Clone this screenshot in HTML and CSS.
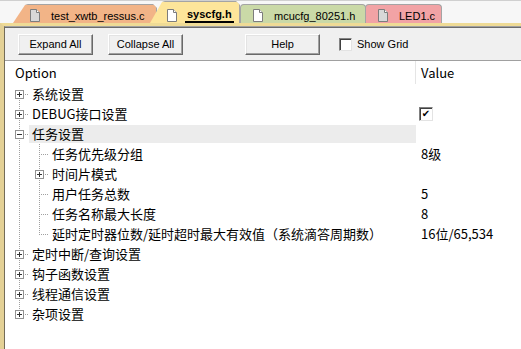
FILE: index.html
```html
<!DOCTYPE html>
<html lang="zh">
<head>
    <meta charset="UTF-8">
    <title>syscfg.h</title>
    <link rel="stylesheet" href="styles.css">
</head>
<body>
    <div class="tabbar">
        <div class="tab tab-a slant">
            <svg class="doc" width="10" height="13" viewBox="0 0 10 13"><path d="M0.5 0.5H6.5L9.5 3.5V12.5H0.5Z" fill="#d8d8d8" stroke="#7d7d7d"/><path d="M6.5 0.5V3.5H9.5" fill="#fff" stroke="#7d7d7d"/></svg>
            <span>test_xwtb_ressus.c</span>
        </div>
        <div class="tab tab-b slant active">
            <svg class="doc" width="10" height="13" viewBox="0 0 10 13"><path d="M0.5 0.5H6.5L9.5 3.5V12.5H0.5Z" fill="#fff" stroke="#7d7d7d"/><path d="M6.5 0.5V3.5H9.5" fill="#fff" stroke="#7d7d7d"/></svg>
            <span>syscfg.h</span>
        </div>
        <div class="tab tab-c">
            <svg class="doc" width="10" height="13" viewBox="0 0 10 13"><path d="M0.5 0.5H6.5L9.5 3.5V12.5H0.5Z" fill="#fff" stroke="#7d7d7d"/><path d="M6.5 0.5V3.5H9.5" fill="#fff" stroke="#7d7d7d"/></svg>
            <span>mcucfg_80251.h</span>
        </div>
        <div class="tab tab-d">
            <svg class="doc" width="10" height="13" viewBox="0 0 10 13"><path d="M0.5 0.5H6.5L9.5 3.5V12.5H0.5Z" fill="#d8d8d8" stroke="#7d7d7d"/><path d="M6.5 0.5V3.5H9.5" fill="#fff" stroke="#7d7d7d"/></svg>
            <span>LED1.c</span>
        </div>
    </div>

    <div class="frame">
        <div class="inner">
            <div class="toolbar">
                <button class="btn">Expand All</button>
                <button class="btn">Collapse All</button>
                <button class="btn help">Help</button>
                <label class="showgrid"><span class="cb"></span>Show Grid</label>
            </div>

            <div class="tree">
                <div class="head">
                    <div class="opt">Option</div>
                    <div class="val">Value</div>
                </div>

                <div class="row">
                    <div class="opt"><i class="c first"><b class="exp plus"></b></i><span class="txt">系统设置</span></div>
                    <div class="val"></div>
                </div>
                <div class="row">
                    <div class="opt"><i class="c tee"><b class="exp plus"></b></i><span class="txt">DEBUG接口设置</span></div>
                    <div class="val"><span class="check">&#10004;</span></div>
                </div>
                <div class="row">
                    <div class="opt"><i class="c tee"><b class="exp"></b></i><span class="txt sel">任务设置</span></div>
                    <div class="val"></div>
                </div>
                <div class="row">
                    <div class="opt"><i class="c vert"></i><i class="c tee"></i><span class="txt">任务优先级分组</span></div>
                    <div class="val">8级</div>
                </div>
                <div class="row">
                    <div class="opt"><i class="c vert"></i><i class="c tee"><b class="exp plus"></b></i><span class="txt">时间片模式</span></div>
                    <div class="val"></div>
                </div>
                <div class="row">
                    <div class="opt"><i class="c vert"></i><i class="c tee"></i><span class="txt">用户任务总数</span></div>
                    <div class="val">5</div>
                </div>
                <div class="row">
                    <div class="opt"><i class="c vert"></i><i class="c tee"></i><span class="txt">任务名称最大长度</span></div>
                    <div class="val">8</div>
                </div>
                <div class="row">
                    <div class="opt"><i class="c vert"></i><i class="c last"></i><span class="txt">延时定时器位数/延时超时最大有效值（系统滴答周期数）</span></div>
                    <div class="val">16位/65,534</div>
                </div>
                <div class="row">
                    <div class="opt"><i class="c tee"><b class="exp plus"></b></i><span class="txt">定时中断/查询设置</span></div>
                    <div class="val"></div>
                </div>
                <div class="row">
                    <div class="opt"><i class="c tee"><b class="exp plus"></b></i><span class="txt">钩子函数设置</span></div>
                    <div class="val"></div>
                </div>
                <div class="row">
                    <div class="opt"><i class="c tee"><b class="exp plus"></b></i><span class="txt">线程通信设置</span></div>
                    <div class="val"></div>
                </div>
                <div class="row">
                    <div class="opt"><i class="c last"><b class="exp plus"></b></i><span class="txt">杂项设置</span></div>
                    <div class="val"></div>
                </div>
            </div>
        </div>
    </div>
</body>
</html>
```

FILE: styles.css
```css
body {
    margin: 0;
    width: 521px;
    height: 349px;
    overflow: hidden;
    background: #fff;
    font-family: "Liberation Sans", Arial, sans-serif;
}

/* tab strip */
.tabbar {
    display: flex;
    align-items: flex-end;
    height: 23px;
    background: #f7f7f7;
    border-top: 1px solid #d0d0d0;
    box-sizing: border-box;
}
.tab {
    display: flex;
    align-items: center;
    box-sizing: border-box;
    height: 19px;
    padding-top: 3px;
    padding-left: 12px;
    border: 1px solid #a4a4a4;
    border-bottom: none;
    border-radius: 4px 4px 0 0;
    font-size: 11px;
    color: #000;
    position: relative;
}
.tab .doc {
    margin-right: 11px;
    flex: none;
}
.tab.slant {
    padding-left: 17px;
    clip-path: polygon(0 100%, 12px 1px, 15px 0, calc(100% - 4px) 0, 100% 4px, 100% 100%);
    border-left: none;
}
.tab-a {
    margin-left: 13px;
    width: 144px;
    background: #f2b487;
}
.tab-b {
    margin-left: -7px;
    width: 90px;
    height: 22px;
    padding-top: 5px;
    background: #fde59a;
    z-index: 2;
}
.tab-b span {
    font-weight: bold;
    border-bottom: 2px solid #000;
    padding: 0 2px 1px;
    margin-left: -3px;
}
.tab-c {
    width: 126px;
    background: #cad9a7;
}
.tab-d {
    margin-left: -1px;
    width: 77px;
    background: #f2a3a5;
}

/* frame in the active tab colour */
.frame {
    border-top: 3px solid #efdb96;
    border-left: 4px solid #e4d196;
    height: 326px;
    box-sizing: border-box;
}
.inner {
    border-left: 1px solid #746c58;
    border-top: 1px solid #a0a0a0;
    height: 100%;
    box-sizing: border-box;
}

/* toolbar */
.toolbar {
    display: flex;
    align-items: center;
    height: 34px;
    padding-left: 13px;
    background: #f0f0f0;
    border-top: 1px solid #6c6c6c;
    border-bottom: 1px solid #a0a0a0;
    box-sizing: border-box;
}
.btn {
    width: 75px;
    height: 21px;
    margin-right: 15px;
    padding: 0;
    font-family: "Liberation Sans", Arial, sans-serif;
    font-size: 11px;
    color: #000;
    background: #f0f0f0;
    border: 1px solid;
    border-color: #fff #696969 #696969 #fff;
    box-shadow: inset -1px -1px #a0a0a0, inset 1px 1px #e3e3e3;
}
.btn.help {
    margin-left: 47px;
    margin-right: 19px;
}
.showgrid {
    display: flex;
    align-items: center;
    font-size: 11px;
}
.cb {
    width: 13px;
    height: 13px;
    box-sizing: border-box;
    margin-right: 5px;
    background: #fff;
    border: 1px solid;
    border-color: #848484 #e3e3e3 #e3e3e3 #848484;
    box-shadow: inset 1px 1px #404040;
}

/* option tree */
.tree {
    font-family: "Noto Sans CJK SC", sans-serif;
    font-size: 13px;
    color: #000;
}
.head {
    display: flex;
    height: 23px;
    line-height: 23px;
}
.head .opt {
    padding-left: 10px;
    border-right: 1px solid #e5e5e5;
}
.opt {
    width: 411px;
    box-sizing: border-box;
    display: flex;
    flex: none;
}
.val {
    padding-left: 5px;
    display: flex;
    align-items: center;
}
.row {
    display: flex;
    height: 20px;
    line-height: 20px;
}
.row .opt {
    padding-left: 4px;
}
.txt {
    padding-left: 3px;
    white-space: nowrap;
}
.txt.sel {
    flex: 1;
    background: #ececec;
    margin: 1px 0 1px;
    line-height: 18px;
}

/* dotted guide cells */
.c {
    width: 20px;
    height: 20px;
    flex: none;
    display: flex;
    align-items: center;
    padding-left: 6px;
    box-sizing: border-box;
}
.vert {
    background: repeating-linear-gradient(#a0a0a0 0 1px, transparent 1px 2px) 10px 0 / 1px 20px no-repeat;
}
.tee {
    background:
        repeating-linear-gradient(#a0a0a0 0 1px, transparent 1px 2px) 10px 0 / 1px 20px no-repeat,
        repeating-linear-gradient(to right, #a0a0a0 0 1px, transparent 1px 2px) 10px 10px / 10px 1px no-repeat;
}
.last {
    background:
        repeating-linear-gradient(#a0a0a0 0 1px, transparent 1px 2px) 10px 0 / 1px 10px no-repeat,
        repeating-linear-gradient(to right, #a0a0a0 0 1px, transparent 1px 2px) 10px 10px / 10px 1px no-repeat;
}
.first {
    background:
        repeating-linear-gradient(#a0a0a0 0 1px, transparent 1px 2px) 10px 10px / 1px 10px no-repeat,
        repeating-linear-gradient(to right, #a0a0a0 0 1px, transparent 1px 2px) 10px 10px / 10px 1px no-repeat;
}
.exp {
    width: 9px;
    height: 9px;
    box-sizing: border-box;
    border: 1px solid #919191;
    background: linear-gradient(#333, #333) center / 5px 1px no-repeat, #fff;
}
.exp.plus {
    background:
        linear-gradient(#333, #333) center / 5px 1px no-repeat,
        linear-gradient(#333, #333) center / 1px 5px no-repeat,
        #fff;
}
.check {
    width: 14px;
    height: 14px;
    box-sizing: border-box;
    margin-left: -2px;
    border: 1px solid;
    border-color: #808080 #e3e3e3 #e3e3e3 #808080;
    box-shadow: inset 1px 1px #404040;
    background: #fff;
    font-size: 10px;
    line-height: 12px;
    text-align: center;
    font-family: "DejaVu Sans", sans-serif;
}
```
